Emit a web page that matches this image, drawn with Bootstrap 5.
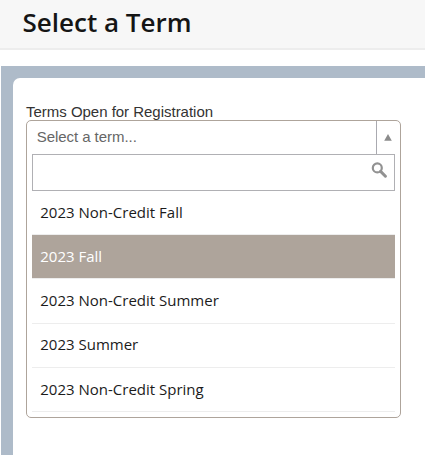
<!DOCTYPE html>
<html lang="en">
<head>
<meta charset="utf-8">
<meta name="viewport" content="width=device-width, initial-scale=1">
<title>Select a Term</title>
<link href="https://cdn.jsdelivr.net/npm/bootstrap@5.3.0/dist/css/bootstrap.min.css" rel="stylesheet">
<style>
body { font-family: "Open Sans", sans-serif; color: #151515; background: #fff; height: 455px; overflow: hidden; }
.page-head { height: 50px; background: #f7f7f7; border-bottom: 2px solid #ededed; padding: 0 0 4px 22.5px; }
.page-head h1 { font-size: 26px; font-weight: 600; line-height: 36px; }
.frame { margin: 16px 0 0 1px; padding: 12px 0 0 12px; background: #aebbc9; height: 389px; }
.panel { background: #fff; border-top-left-radius: 7px; padding: 25px 0 0 13px; }
.term-label { font: 15px/17px "Liberation Sans", Arial, sans-serif; letter-spacing: -.02px; color: #333; }
.term-select { width: 375px; height: 298px; border: 1px solid #aea49b; border-radius: 5px; }
.choice { height: 33px; font: 15px/31px "Liberation Sans", Arial, sans-serif; letter-spacing: -.05px; color: #666; padding-left: 9.7px; }
.toggle-arrow { width: 24px; border-left: 1px solid #aaaab0; padding: 0 0 0 6.5px; }
.results { margin: 0 5px; }
.search-box { height: 37px; border: 1px solid #b0b0b4; padding: 7px 7px 0 0; }
.results .list-group-item { height: 44px; padding: 0 8px 0 8.3px; font-size: 15px; line-height: 43px; color: #1b1b1b; border: 0; border-bottom: 1px solid #ededed; background: #fff; }
.results .list-group-item:nth-child(3) { height: 45px; }
.results .list-group-item:nth-child(4) { line-height: 41px; }
.results .list-group-item:last-child { border-bottom: 1px solid #ededed; }
.results .list-group-item.active { background: #aea49b; background-clip: padding-box; color: #fff; margin: 0; }
</style>
</head>
<body>
<header class="page-head d-flex align-items-center"><h1 class="m-0">Select a Term</h1></header>
<main class="frame">
  <section class="panel h-100">
    <label class="term-label d-block" for="term-search">Terms Open for Registration</label>
    <div class="term-select">
      <div class="choice d-flex justify-content-between">
        <span>Select a term...</span>
        <span class="toggle-arrow d-flex align-items-center"><svg width="8" height="7" viewBox="0 0 8 7"><path d="M4 0 7.8 6.8H.2Z" fill="#8b8b8b"/></svg></span>
      </div>
      <div class="results">
        <div class="search-box d-flex justify-content-end" id="term-search">
          <svg width="17" height="17" viewBox="-.6 .4 17 17" fill="none" stroke="#929292"><circle cx="6.7" cy="6.3" r="4.5" stroke-width="2.2"/><path d="M10 9.8 14.8 14.6" stroke-width="3" stroke-linecap="round"/></svg>
        </div>
        <ul class="list-group list-group-flush">
          <li class="list-group-item">2023 Non-Credit Fall</li>
          <li class="list-group-item active">2023 Fall</li>
          <li class="list-group-item">2023 Non-Credit Summer</li>
          <li class="list-group-item">2023 Summer</li>
          <li class="list-group-item">2023 Non-Credit Spring</li>
        </ul>
      </div>
    </div>
  </section>
</main>
<script src="https://cdn.jsdelivr.net/npm/bootstrap@5.3.0/dist/js/bootstrap.bundle.min.js"></script>
</body>
</html>
